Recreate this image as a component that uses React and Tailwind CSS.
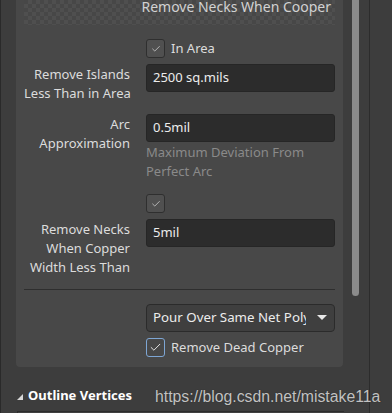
import { Check } from "lucide-react";

const font = { fontFamily: '"Noto Sans", "Open Sans", sans-serif' };

function Box({ focused }) {
  return (
    <div
      className={`w-[19px] h-[19px] rounded-[3px] border flex items-center justify-center ${
        focused ? "border-[#7ea6d4] bg-[#474747]" : "border-[#2f2f2f] bg-[#505050]"
      }`}
    >
      <Check size={focused ? 13 : 10} strokeWidth={focused ? 1.8 : 1.6} className="text-[#e6e6e6]" />
    </div>
  );
}

function Field({ value }) {
  return (
    <div className="h-[28px] rounded-[3px] bg-[#2c2c2c] border border-[#262626] flex items-center pl-[6px] text-[13px] text-[#ececec]">
      {value}
    </div>
  );
}

function Label({ children }) {
  return (
    <div className="text-right text-[13px] leading-[19px] text-[#dcdcdc] pt-px whitespace-nowrap">{children}</div>
  );
}

export default function App() {
  return (
    <div className="w-[392px] h-[413px] overflow-hidden bg-[#3d3d3d] flex relative" style={font}>
      <div className="w-px bg-[#2a2a2a]" />
      {/* panel */}
      <div className="pl-[15px] w-[343px] flex flex-col">
        <div className="w-[327px] bg-[#484848] rounded-b-[4px] px-2 pb-[10px] flex flex-col">
          {/* header (checker) */}
          <div
            className="h-[25px] relative overflow-hidden"
            style={{
              backgroundColor: "#474747",
              backgroundImage:
                "linear-gradient(45deg, #4f4f4f 25%, transparent 25%, transparent 75%, #4f4f4f 75%), linear-gradient(45deg, #4f4f4f 25%, transparent 25%, transparent 75%, #4f4f4f 75%)",
              backgroundSize: "8px 8px",
              backgroundPosition: "0 0, 4px 4px",
            }}
          >
            <div className="absolute right-[4px] top-[-3px] text-[14px] leading-[19px] text-[#d2d2d2]">
              Remove Necks When Cooper
            </div>
          </div>

          <div className="grid grid-cols-[106px_189px] gap-x-4 mt-[14px]">
            <div />
            <div className="flex items-center gap-[6px] h-[19px]">
              <Box />
              <span className="text-[13px] text-[#dcdcdc]">In Area</span>
            </div>
          </div>

          <div className="grid grid-cols-[106px_189px] gap-x-4 mt-[6px] items-start">
            <Label>
              Remove Islands
              <br />
              Less Than in Area
            </Label>
            <Field value="2500 sq.mils" />
          </div>

          <div className="grid grid-cols-[106px_189px] gap-x-4 mt-[11px] items-start">
            <Label>
              Arc
              <br />
              Approximation
            </Label>
            <div>
              <Field value="0.5mil" />
              <div className="text-[13px] leading-[19px] text-[#8a8a8a] mt-px">
                Maximum Deviation From
                <br />
                Perfect Arc
              </div>
            </div>
          </div>

          <div className="grid grid-cols-[106px_189px] gap-x-4 mt-[13px]">
            <div />
            <Box />
          </div>

          <div className="grid grid-cols-[106px_189px] gap-x-4 mt-[6px] items-start">
            <Label>
              Remove Necks
              <br />
              When Copper
              <br />
              Width Less Than
            </Label>
            <Field value="5mil" />
          </div>

          <div className="h-px bg-[#2e2e2e] mt-[12px]" />

          <div className="grid grid-cols-[106px_189px] gap-x-4 mt-[14px]">
            <div />
            <div className="h-[28px] rounded-[4px] bg-[#3f3f3f] border border-[#2b2b2b] flex items-center pl-[6px] pr-[7px] text-[13.3px] text-[#ececec]">
              <span className="flex-1 overflow-hidden whitespace-nowrap">Pour Over Same Net Poly</span>
              <svg width="10" height="6" viewBox="0 0 10 6" className="ml-[11px] shrink-0">
                <path d="M0 0h10L5 5z" fill="#e8e8e8" />
              </svg>
            </div>
          </div>

          <div className="grid grid-cols-[106px_189px] gap-x-4 mt-[6px]">
            <div />
            <div className="flex items-center gap-[6px] h-[19px]">
              <Box focused />
              <span className="text-[13px] text-[#dcdcdc]">Remove Dead Copper</span>
            </div>
          </div>
        </div>

        <div className="flex items-center mt-[19px] h-[19px] pl-px">
          <svg width="6" height="6" viewBox="0 0 6 6" className="mr-[5px] mt-[2px]">
            <path d="M6 0v6H0z" fill="#d8d8d8" />
          </svg>
          <span className="text-[13px] font-bold text-white">Outline Vertices</span>
        </div>
        <div className="mt-[6px] ml-px h-[4px] border-t border-l border-[#2c2c2c] bg-[#404040]" />
      </div>

      {/* scrollbar */}
      <div className="w-[8px] ml-[8px] relative">
        <div className="w-[7px] h-[296px] bg-[#8b8b8b] rounded-b-[4px]" />
      </div>
      <div className="w-px bg-[#2c2c2c] ml-[9px]" />
      <div className="flex-1" />

      <div
        className="absolute left-[155px] top-[385px] text-[15.8px] text-[#c2c2c2] whitespace-nowrap"
        style={{ fontFamily: '"Liberation Sans", Arial, sans-serif', textShadow: "0 0 1px #222" }}
      >
        https://blog.csdn.net/mistake11a
      </div>
    </div>
  );
}
